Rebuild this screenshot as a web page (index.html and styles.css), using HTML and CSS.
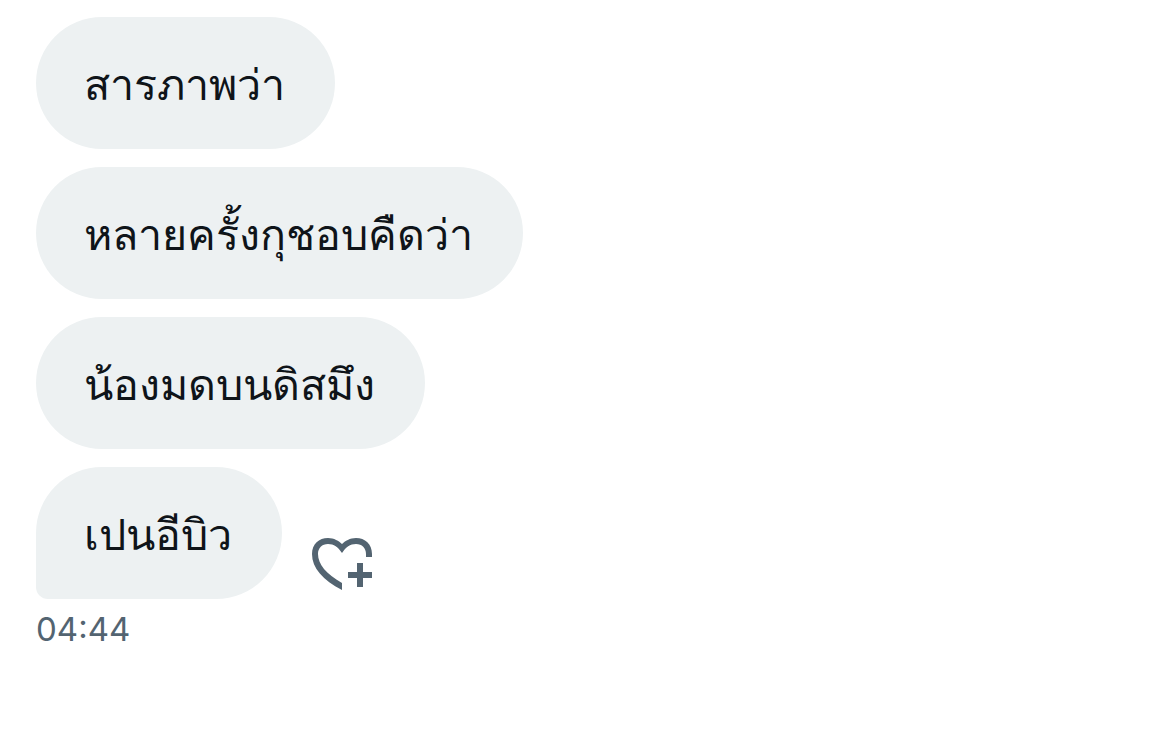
FILE: index.html
```
<!DOCTYPE html>
<html lang="th">
<head>
<meta charset="utf-8">
<meta name="viewport" content="width=device-width, initial-scale=1">
<title>ข้อความ</title>
<link rel="stylesheet" href="styles.css">
</head>
<body>
<main class="chat">
    <div class="row"><p class="bubble">สารภาพว่า</p></div>
    <div class="row"><p class="bubble">หลายครั้งกุชอบคืดว่า</p></div>
    <div class="row"><p class="bubble">น้องมดบนดิสมึง</p></div>
    <div class="row">
        <p class="bubble last">เปนอีบิว</p>
        <button class="react" type="button" aria-label="เพิ่มความรู้สึก">
            <svg viewBox="0 0 60 54" width="60" height="54" aria-hidden="true">
                <path d="M60 20V17C60 7 53 1 44 1C38 1 33 4 30 7C27 4 22 1 16 1C7 1 0 7 0 17C0 31 11 43 30 53V46C14 37 6 27 6 17C6 11 10 7 16 7C22 7 26 10 30 16C34 10 38 7 44 7C50 7 54 11 54 17V20z" fill="#536471"/>
                <path d="M45 26h6v9h9v6h-9v9h-6v-9h-9v-6h9z" fill="#536471"/>
            </svg>
        </button>
    </div>
    <time class="time" datetime="04:44">04:44</time>
</main>
</body>
</html>
```
FILE: styles.css
```
*{margin:0; padding:0; box-sizing:border-box;}
body{background:#fff; color:#0f1419; font-family:"Liberation Sans",sans-serif;}
.chat{display:flex; flex-direction:column; gap:18px; padding:17px 36px;}
.row{display:flex; align-items:flex-end; gap:30px;}
.bubble{padding:38px 50px 34px 48px; border-radius:66px; background:#edf1f2; font-size:43px; line-height:60px;}
.last{border-bottom-left-radius:12px;}
.react{padding-bottom:8px; border:0; background:none; cursor:pointer;}
.react svg{display:block;}
.time{margin-top:-6px; color:#536471; font-family:Inter,"Liberation Sans",sans-serif; font-size:33px; line-height:36px;}
```
